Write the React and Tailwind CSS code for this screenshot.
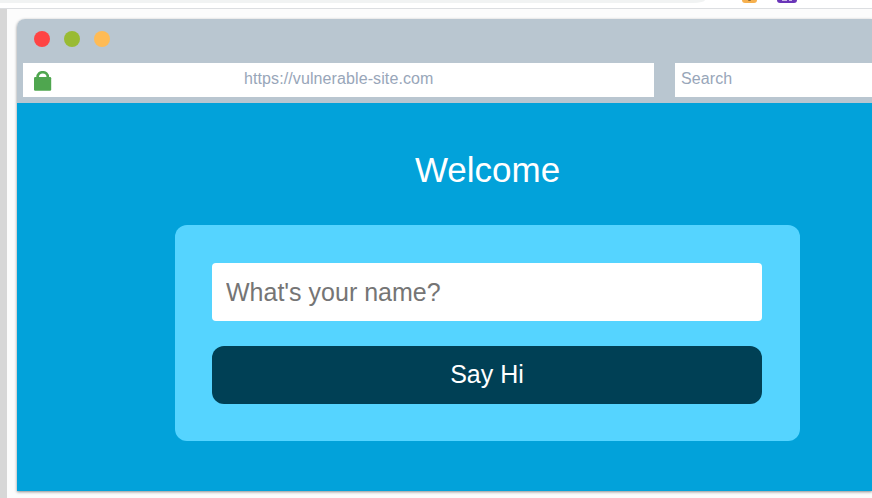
function HostToolbar() {
  return (
    <div className="flex h-[9px] shrink-0 items-start overflow-hidden border-b border-[#dcdee1] bg-white">
      <div className="h-[3px] w-[705px] shrink-0 rounded-br-[12px_3px] bg-[#f1f3f3]" />
      <div className="ml-[37px] flex h-[3px] w-[15px] items-start justify-center rounded-b-[3px] bg-[#f6b04e]">
        <div className="h-px w-[3px] rounded-b-sm bg-[#8a6631]" />
      </div>
      <div className="ml-5 flex h-[3px] w-5 items-start justify-center gap-[2px] rounded-b-[3px] bg-[#6a35b8]">
        <div className="h-px w-[5px] bg-[#c9b6e6]" />
        <div className="h-px w-[3px] bg-[#c9b6e6]" />
      </div>
    </div>
  );
}

function Padlock() {
  return (
    <svg width="18" height="20" viewBox="0 0 18 20" className="shrink-0">
      <path d="M3.6 8V6.1C3.6 3.2 5.8 1.2 8.7 1.2s5.1 2 5.1 4.9V8" fill="none" stroke="#4fa64f" strokeWidth="2.6" />
      <rect x="0" y="6" width="17.2" height="13.8" rx="1.2" fill="#4fa64f" />
    </svg>
  );
}

function BrowserBar() {
  return (
    <div className="h-[84px] rounded-tl-[8px] bg-[#b9c6d0] pl-1.5">
      <div className="flex h-11 gap-[15px] pt-3 pl-[11px]">
        <span className="h-[15.5px] w-[15.5px] rounded-full bg-[#ff4444]" />
        <span className="-ml-[0.5px] h-[15.5px] w-[15.5px] rounded-full bg-[#99bb33]" />
        <span className="-ml-[0.5px] h-[15.5px] w-[15.5px] rounded-full bg-[#ffbb55]" />
      </div>
      <div className="flex h-[34px] gap-[21px] text-[16px] leading-[32px] tracking-[0.1px] text-[#98a6b9]">
        <div className="flex w-[631px] shrink-0 bg-white pl-[11px]">
          <div className="pt-2">
            <Padlock />
          </div>
          <span className="ml-48">https://vulnerable-site.com</span>
        </div>
        <div className="flex-1 bg-white pl-1.5">Search</div>
      </div>
    </div>
  );
}

function WelcomePage() {
  return (
    <main className="h-[388px] bg-[#02a2da] pl-[158px]">
      <h1 className="h-[122px] w-[625px] pt-[47px] text-center text-[35px] leading-[40px] text-white">Welcome</h1>
      <form className="flex h-[216px] w-[625px] flex-col gap-[25px] rounded-[12px] bg-[#55d4ff] px-[37px] pt-[38px] pr-[38px]">
        <input
          type="text"
          placeholder="What's your name?"
          className="h-[58px] w-full rounded-[4px] bg-white px-[14px] text-[25px] text-[#757575] outline-none placeholder:text-[#757575]"
        />
        <button type="button" className="h-[58px] w-full rounded-[12px] bg-[#004055] text-[25px] text-white">
          Say Hi
        </button>
      </form>
    </main>
  );
}

export default function App() {
  return (
    <div className="flex h-[498px] w-[872px] flex-col overflow-hidden bg-[#fcfcfc] font-['Liberation_Sans',Arial,sans-serif]">
      <HostToolbar />
      <div className="flex min-h-0 flex-1">
        <div className="w-[7px] shrink-0 bg-[#d7d7d7]" />
        <div className="flex-1 pt-[10px] pl-[10px]">
          <div className="rounded-tl-[8px] shadow-[0_1px_3px_rgba(0,0,0,0.45)]">
            <BrowserBar />
            <WelcomePage />
          </div>
        </div>
      </div>
    </div>
  );
}
